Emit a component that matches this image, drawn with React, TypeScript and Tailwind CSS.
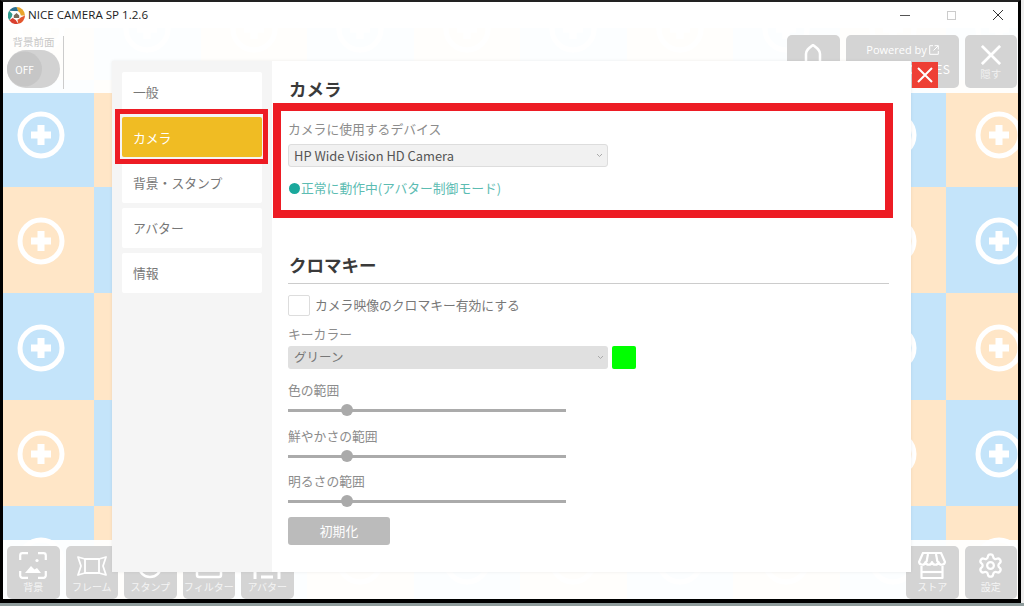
import React from "react";
import { Settings } from "lucide-react";

const jp = "font-['Noto_Sans_CJK_JP','Noto_Sans',sans-serif]";

function Plus() {
  return (
    <svg width="48" height="48" viewBox="0 0 48 48" fill="none">
      <circle cx="24" cy="24" r="21" stroke="#fff" strokeWidth="5" />
      <path d="M24 14v20M14 24h20" stroke="#fff" strokeWidth="7" />
    </svg>
  );
}

const cells = Array.from({ length: 66 }, (_, i) => i);

function BottomButton({ label, children }: { label: string; children: React.ReactNode }) {
  return (
    <div className="flex h-[53px] w-[52.5px] flex-col items-center rounded-[5px] bg-[#d4d4d4] pt-[5px] text-white">
      <div className="flex h-[29px] w-full items-center justify-center">{children}</div>
      <div className="mt-[1px] whitespace-nowrap text-[10px] leading-[12px] text-[#f4f4f4]">{label}</div>
    </div>
  );
}

function Chevron() {
  return (
    <svg width="7" height="5" viewBox="0 0 7 5" fill="none">
      <path d="M1 1l2.5 2.5L6 1" stroke="#aaa" strokeWidth="1" />
    </svg>
  );
}

function Slider({ label, mt }: { label: string; mt: string }) {
  return (
    <>
      <div className={`${mt} text-[12.8px] leading-[18px] text-[#8c8c8c]`}>{label}</div>
      <div className="mt-[5px] flex h-[12px] items-center">
        <div className="relative h-[3px] w-[278px] bg-[#ababab]">
          <div className="absolute left-[53px] top-[-4.5px] h-[12px] w-[12px] rounded-full bg-[#aaaaaa]" />
        </div>
      </div>
    </>
  );
}

function NavItem({ label, active }: { label: string; active?: boolean }) {
  return (
    <div
      className={`flex h-10 items-center rounded-[2px] pl-[11px] text-[12.8px] ${
        active ? "bg-[#f0bc23] text-white" : "bg-white text-[#777777]"
      }`}
    >
      {label}
    </div>
  );
}

export default function App() {
  return (
    <div className={`relative h-[606px] w-[1024px] overflow-hidden bg-[#eeeeee] ${jp}`}>
      <div className="h-[603px] w-[1021px] border-x-[3px] border-b-[4px] border-t-[2px] border-x-black border-b-black border-t-[#222222] bg-white">
        {/* title bar */}
        <div className="flex h-[26px] items-center bg-white pl-[5px]">
          <svg width="17" height="17" viewBox="0 0 20 20">
            <path d="M10 0a10 10 0 0 1 10 10h-6z" fill="#e9a52c" />
            <path d="M20 10a10 10 0 0 1-8 9.8L11 14z" fill="#e4572e" />
            <path d="M12 19.8A10 10 0 0 1 1.5 15.5L7 12z" fill="#d9402f" />
            <path d="M1.5 15.5A10 10 0 0 1 1.5 4.5L6 9z" fill="#2f9c8f" />
            <path d="M1.5 4.5A10 10 0 0 1 10 0l2 5z" fill="#2b6f8f" />
            <circle cx="10" cy="10" r="5" fill="#fff" />
            <path d="M6.8 10L10 7l3.2 3v3H6.8z" fill="#7a6a58" />
          </svg>
          <span className="ml-[3px] font-['Open_Sans',sans-serif] text-[11.6px] text-[#222222]">NICE CAMERA SP 1.2.6</span>
          <div className="ml-auto flex items-center">
            <div className="h-[1px] w-[10px] bg-[#555555]" />
            <div className="ml-[37px] h-[9px] w-[9px] border border-[#cccccc]" />
            <svg className="ml-[37px] mr-[15px]" width="10" height="10" viewBox="0 0 10 10" fill="none">
              <path d="M0 0l10 10M10 0L0 10" stroke="#333" strokeWidth="1" />
            </svg>
          </div>
        </div>

        {/* main */}
        <div className="relative h-[571px] overflow-hidden bg-white">
          <div className="absolute left-[-15.5px] top-[-54px] grid w-[1200px] grid-cols-[repeat(11,106.5px)] auto-rows-[106.4px]">
            {cells.map((i) => {
              const row = Math.floor(i / 11);
              const col = i % 11;
              const blue = (row + col) % 2 === 1;
              return (
                <div key={i} className={`flex items-center justify-center pt-[3px] ${blue ? "bg-[#c4e4fa]" : "bg-[#ffe6c7]"}`}>
                  <Plus />
                </div>
              );
            })}
          </div>

          {/* top / bottom bars */}
          <div className="relative flex h-full flex-col justify-between">
            <div className="flex h-[65px] items-start justify-between bg-white/95 pl-[3px] pr-[1px] pt-[7px]">
              <div className="flex">
                <div className="flex w-[55px] flex-col items-center">
                  <div className="text-[10.5px] leading-[14px] text-[#c8c8c8]">背景前面</div>
                  <div className="mt-[1px] h-[38px] w-[53px] rounded-full bg-[#d2d2d2]">
                    <div className="flex h-[35px] w-[35px] translate-y-[1.5px] items-center justify-center rounded-full bg-[#c6c6c6] text-[10px] text-white">OFF</div>
                  </div>
                </div>
                <div className="ml-[2px] mt-[1px] h-[53px] w-[1px] bg-[#cccccc]" />
              </div>
              <div className="flex gap-[6px]">
                <div className="flex h-[53px] w-[52.5px] justify-center rounded-[5px] bg-[#d4d4d4] pt-[9px]">
                  <svg width="18" height="24" viewBox="0 0 18 24" fill="none">
                    <path d="M2 24V10C2 6 5 4 9 1c4 3 7 5 7 9v14" stroke="#fff" strokeWidth="2.5" />
                  </svg>
                </div>
                <div className="flex h-[53px] w-[113px] flex-col rounded-[5px] bg-[#d4d4d4] pt-[7px] text-white">
                  <div className="flex items-center justify-center gap-[2px] pl-[1px] font-['Open_Sans',sans-serif] text-[11px] leading-[16px]">
                    Powered by
                    <svg width="10" height="10" viewBox="0 0 10 10" fill="none">
                      <path d="M4 .7H.7v8.6h8.6V6M5.5.7h3.8v3.8M9.2.8L4.5 5.5" stroke="#fff" strokeWidth="1" />
                    </svg>
                  </div>
                  <div className="mt-[3px] pr-[8px] text-right text-[12px] leading-[16px] tracking-[0.5px]">GAMES</div>
                </div>
                <div className="flex h-[53px] w-[52.5px] flex-col items-center rounded-[5px] bg-[#d4d4d4] pt-[10px]">
                  <svg width="20" height="20" viewBox="0 0 22 22" fill="none">
                    <path d="M1 1l20 20M21 1L1 21" stroke="#fff" strokeWidth="3" />
                  </svg>
                  <div className="mt-[2px] text-[10.5px] leading-[14px] text-[#f0f0f0]">隠す</div>
                </div>
              </div>
            </div>

            <div className="flex h-[59px] items-end justify-between bg-white/95 pl-[4px] pr-[1px]">
              <div className="flex gap-[6px]">
                <BottomButton label="背景">
                  <svg width="28" height="27" viewBox="0 0 28 27" fill="none" stroke="#fff" strokeWidth="2.2">
                    <path d="M1.2 8V3.5a2.3 2.3 0 0 1 2.3-2.3H9M19 1.2h5.5a2.3 2.3 0 0 1 2.3 2.3V8M26.8 19v4.5a2.3 2.3 0 0 1-2.3 2.3H19M9 25.8H3.5a2.3 2.3 0 0 1-2.3-2.3V19" />
                    <circle cx="18" cy="8.5" r="1.6" fill="#fff" stroke="none" />
                    <path d="M6 21l6-7 3.5 3.5 2.5-1.5 4 5z" fill="#fff" stroke="none" />
                  </svg>
                </BottomButton>
                <BottomButton label="フレーム">
                  <svg width="30" height="20" viewBox="0 0 30 20" fill="none" stroke="#fff" strokeWidth="1.8" strokeLinejoin="round">
                    <path d="M1 1l7 2h14l7-2-3 9 3 9-7-2H8l-7 2 3-9z" />
                    <path d="M8 3v14M22 3v14" />
                  </svg>
                </BottomButton>
                <BottomButton label="スタンプ">
                  <svg width="26" height="26" viewBox="0 0 26 26" fill="none" stroke="#fff" strokeWidth="2.5">
                    <circle cx="13" cy="13" r="11" />
                    <circle cx="13" cy="13" r="4" />
                  </svg>
                </BottomButton>
                <BottomButton label="フィルター">
                  <svg width="28" height="26" viewBox="0 0 28 26" fill="none" stroke="#fff" strokeWidth="2.5">
                    <rect x="2" y="2" width="24" height="22" rx="2" />
                  </svg>
                </BottomButton>
                <BottomButton label="アバター">
                  <svg width="28" height="26" viewBox="0 0 28 26" fill="none" stroke="#fff" strokeWidth="3">
                    <path d="M2 26V14M26 26V14M8 24h12" />
                  </svg>
                </BottomButton>
              </div>
              <div className="flex gap-[6px]">
                <BottomButton label="ストア">
                  <svg width="28" height="28" viewBox="0 0 28 28" fill="none" stroke="#fff" strokeWidth="2.2" strokeLinejoin="round">
                    <path d="M5 1h18l4 9a3.3 3.3 0 0 1-6.5 0 3.3 3.3 0 0 1-6.5 0 3.3 3.3 0 0 1-6.5 0A3.3 3.3 0 0 1 1 10z" />
                    <path d="M10 2l-1.5 8M18 2l1.5 8" />
                    <path d="M3.5 14v12h21V14" />
                    <path d="M3.5 20h21" />
                  </svg>
                </BottomButton>
                <BottomButton label="設定">
                  <Settings size={27} strokeWidth={2} color="#fff" />
                </BottomButton>
              </div>
            </div>
          </div>

          {/* settings dialog */}
          <div className="absolute left-[109px] top-[33px] flex h-[511px] w-[799px] bg-white shadow-[0_0_3px_rgba(0,0,0,0.08)]">
            <div className="flex w-[160px] flex-col gap-[5.25px] bg-[#f5f5f5] px-[10px] pt-[11px]">
              <NavItem label="一般" />
              <NavItem label="カメラ" active />
              <NavItem label="背景・スタンプ" />
              <NavItem label="アバター" />
              <NavItem label="情報" />
            </div>
            <div className="flex-1 pl-[16px] pr-[22px] pt-[15px]">
              <div className="ml-[1px] text-[17.5px] font-bold leading-[26px] text-[#3a3a3a]">カメラ</div>
              <div className="mt-[18px] text-[12.8px] leading-[18px] text-[#8c8c8c]">カメラに使用するデバイス</div>
              <div className="mt-[6px] flex h-[23px] w-[320px] items-center justify-between rounded-[3px] border border-[#dddddd] bg-[#f1f1f1] pl-[5px] pr-[4px] text-[12.9px] text-[#555555]">
                <span>HP Wide Vision HD Camera</span>
                <Chevron />
              </div>
              <div className="mt-[12px] flex items-center text-[12.8px] leading-[18px] text-[#5cbcb2]">
                <span className="ml-[1px] mr-[1px] inline-block h-[11px] w-[11px] rounded-full bg-[#1aa89c]" />
                正常に動作中(アバター制御モード)
              </div>
              <div className="ml-[1px] mt-[55px] text-[17.5px] font-bold leading-[26px] text-[#3a3a3a]">クロマキー</div>
              <div className="mt-[5px] h-[1px] bg-[#cccccc]" />
              <div className="mt-[11px] flex h-[21px] items-center text-[12.8px] text-[#777777]">
                <div className="h-[21px] w-[22px] rounded-[2px] border border-[#dddddd] bg-white" />
                <span className="ml-[5px] pb-[1px]">カメラ映像のクロマキー有効にする</span>
              </div>
              <div className="mt-[9px] text-[12.8px] leading-[18px] text-[#8c8c8c]">キーカラー</div>
              <div className="mt-[3px] flex gap-[4px]">
                <div className="flex h-[23px] w-[320px] items-center justify-between rounded-[3px] bg-[#e0e0e0] pl-[6px] pr-[4px] text-[12.5px] text-[#777777]">
                  グリーン
                  <Chevron />
                </div>
                <div className="h-[23px] w-[24px] rounded-[2px] bg-[#00ff00]" />
              </div>
              <Slider label="色の範囲" mt="mt-[12px]" />
              <Slider label="鮮やかさの範囲" mt="mt-[11px]" />
              <Slider label="明るさの範囲" mt="mt-[10px]" />
              <div className="mt-[10px] flex h-[28px] w-[102px] items-center justify-center rounded-[3px] bg-[#bbbbbb] text-[12.8px] text-white">初期化</div>
            </div>
            <div className="absolute left-[800px] top-[1px] flex h-[26px] w-[26px] items-center justify-center bg-[#ee4035]">
              <svg width="16" height="16" viewBox="0 0 16 16" fill="none">
                <path d="M1 1l14 14M15 1L1 15" stroke="#fff" strokeWidth="2" />
              </svg>
            </div>
          </div>
        </div>
      </div>
      <div className="h-[3px] bg-[#8f9c9c]" />

      {/* red annotation boxes */}
      <div className="absolute left-[115px] top-[109px] h-[55px] w-[153px] border-[5px] border-[#ed1c24]" />
      <div className="absolute left-[273px] top-[103px] h-[115px] w-[620px] border-[8px] border-[#ed1c24]" />
    </div>
  );
}
